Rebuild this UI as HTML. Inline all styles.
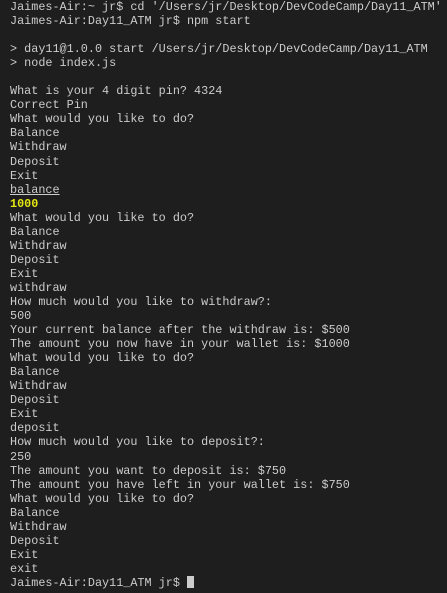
<!DOCTYPE html>
<html><head><style>
html,body{margin:0;padding:0;background:#1e1e1e;width:447px;height:593px;overflow:hidden}
pre{margin:0;padding:0 0 0 10px;font-family:"Liberation Mono","DejaVu Sans Mono",monospace;font-size:11.8px;line-height:14.05px;color:#cccccc;white-space:pre}
.u{text-decoration:underline}
.y{color:#e5e510;font-weight:bold}
.c{background:#cccccc;display:inline-block;width:7px;height:12px;vertical-align:-2px}
</style></head><body><pre>Jaimes-Air:~ jr$ cd '/Users/jr/Desktop/DevCodeCamp/Day11_ATM'
Jaimes-Air:Day11_ATM jr$ npm start

&gt; day11@1.0.0 start /Users/jr/Desktop/DevCodeCamp/Day11_ATM
&gt; node index.js

What is your 4 digit pin? 4324
Correct Pin
What would you like to do?
Balance
Withdraw
Deposit
Exit
<span class="u">balance</span>
<span class="y">1000</span>
What would you like to do?
Balance
Withdraw
Deposit
Exit
withdraw
How much would you like to withdraw?:
500
Your current balance after the withdraw is: $500
The amount you now have in your wallet is: $1000
What would you like to do?
Balance
Withdraw
Deposit
Exit
deposit
How much would you like to deposit?:
250
The amount you want to deposit is: $750
The amount you have left in your wallet is: $750
What would you like to do?
Balance
Withdraw
Deposit
Exit
exit
Jaimes-Air:Day11_ATM jr$ <span class="c"></span></pre></body></html>
